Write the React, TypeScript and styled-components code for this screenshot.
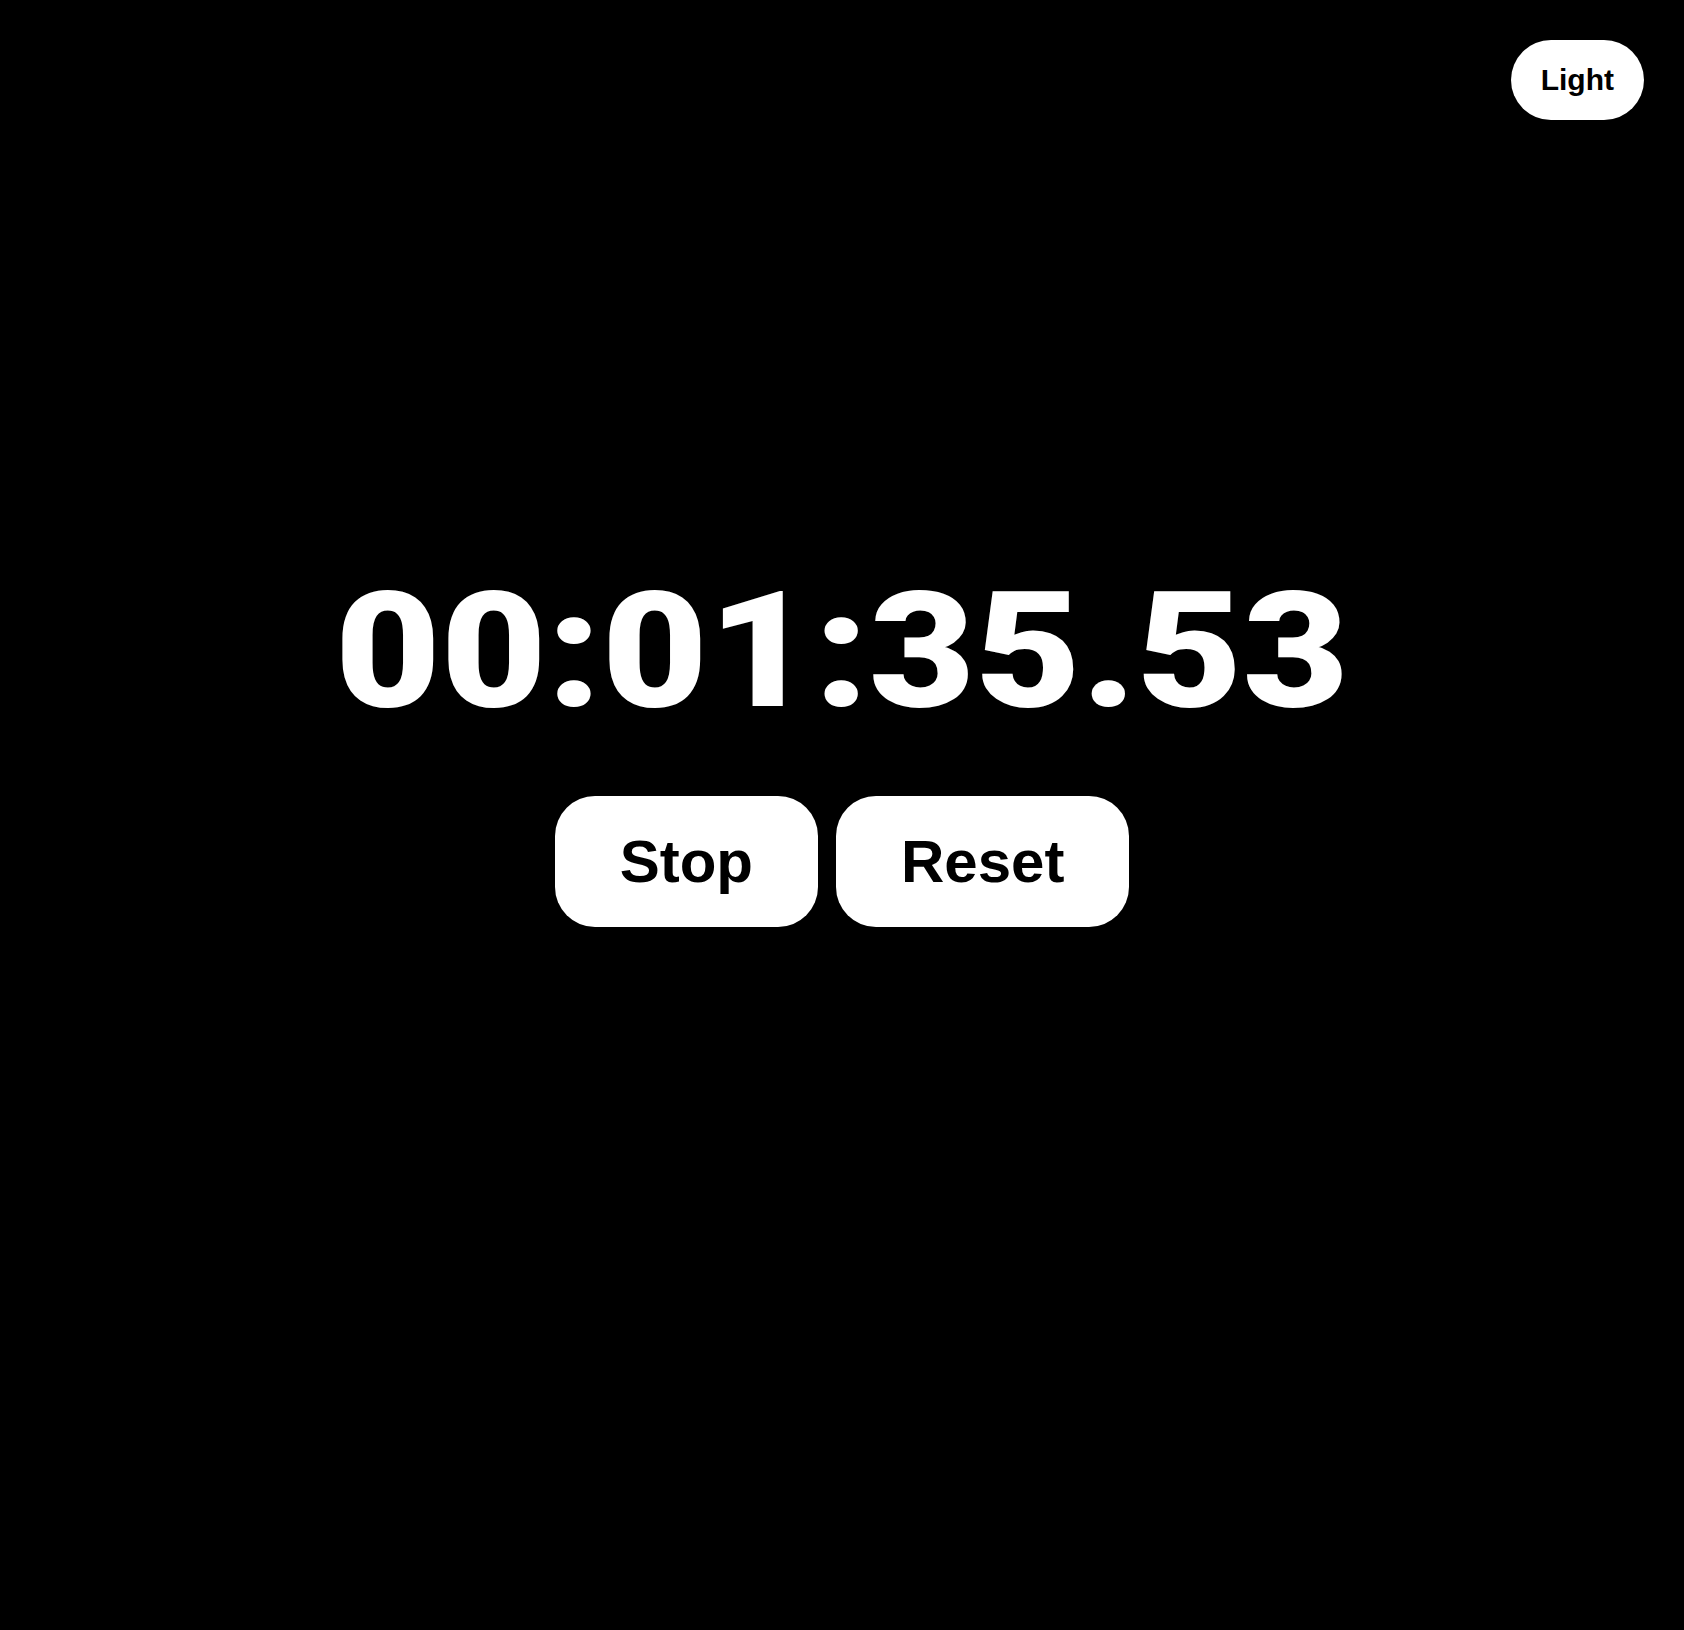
import styled, {createGlobalStyle} from "styled-components";
import {FunctionComponent} from "react";

const GlobalStyle = createGlobalStyle`
    html, body {
        margin: 0;
        padding: 0;
        background: #000;
    }
    body {
        font-family: "Liberation Sans", Arial, sans-serif;
    }
`;

const Page = styled.main`
    position: relative;
    min-height: 1630px;
    box-sizing: border-box;
    padding-bottom: 130px;
    display: flex;
    flex-direction: column;
    align-items: center;
    justify-content: center;
`;

const ThemeToggle = styled.button`
    position: absolute;
    top: 40px;
    right: 40px;
    padding: 23px 30px;
    border: none;
    border-radius: 40px;
    background: #fff;
    color: #000;
    font-family: "Liberation Sans", Arial, sans-serif;
    font-weight: 700;
    font-size: 30px;
    line-height: 34px;
    cursor: pointer;
`;

const Time = styled.div`
    display: inline-block;
    color: #fff;
    font-family: Roboto, "Liberation Sans", Arial, sans-serif;
    font-weight: 900;
    font-size: 162px;
    line-height: 156px;
    transform: scaleX(1.13);
    white-space: nowrap;
`;

const Controls = styled.div`
    display: flex;
    gap: 18px;
    margin-top: 67px;
`;

const ControlButton = styled.button`
    padding: 31px 65px;
    border: none;
    border-radius: 40px;
    background: #fff;
    color: #000;
    font-family: "Liberation Sans", Arial, sans-serif;
    font-weight: 700;
    font-size: 60px;
    line-height: 69px;
    cursor: pointer;
`;

const pad = (n: number) => n.toString().padStart(2, "0");

const formatTime = (ms: number) => {
    const h = Math.floor(ms / 3600000);
    const m = Math.floor(ms / 60000) % 60;
    const s = Math.floor(ms / 1000) % 60;
    const cs = Math.floor(ms / 10) % 100;
    return `${pad(h)}:${pad(m)}:${pad(s)}.${pad(cs)}`;
};

const App: FunctionComponent = () => {
    const elapsed = 95530;
    return <>
        <GlobalStyle />
        <Page>
            <ThemeToggle>Light</ThemeToggle>
            <Time>{formatTime(elapsed)}</Time>
            <Controls>
                <ControlButton>Stop</ControlButton>
                <ControlButton>Reset</ControlButton>
            </Controls>
        </Page>
    </>
}

export default App;
